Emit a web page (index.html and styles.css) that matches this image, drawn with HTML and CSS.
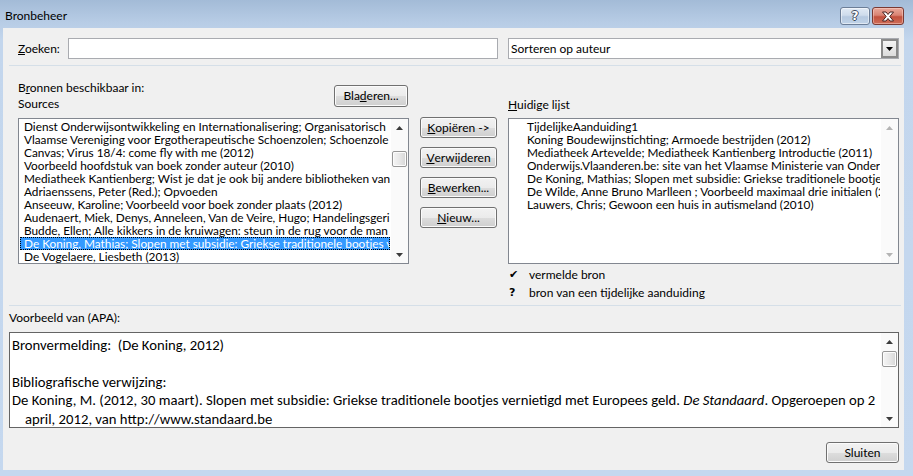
FILE: index.html
```html
<!DOCTYPE html>
<html lang="nl">
<head>
<meta charset="utf-8">
<title>Bronbeheer</title>
<link rel="stylesheet" href="styles.css">
</head>
<body>
<div class="window">
  <div class="titlebar">
    <span class="title">Bronbeheer</span>
    <div class="caption-btns">
      <div class="cbtn help"><span class="qmark">?</span></div>
      <div class="cbtn close">
        <svg width="14" height="11" viewBox="0 0 14 11"><path d="M1.5 1 L5 1 L7 3.5 L9 1 L12.5 1 L8.8 5.5 L12.5 10 L9 10 L7 7.5 L5 10 L1.5 10 L5.2 5.5 Z" fill="#fff" stroke="#4b2320" stroke-width="1" stroke-linejoin="round"/></svg>
      </div>
    </div>
  </div>
  <div class="panel">
    <div class="search-row">
      <div class="lbl-search"><u>Z</u>oeken:</div>
      <div class="textbox"></div>
      <div class="combo">
        <span class="combo-text">Sorteren op auteur</span>
        <div class="combo-btn"><svg width="7" height="4" viewBox="0 0 7 4"><path d="M0 0 H7 L3.5 4 Z" fill="#000"/></svg></div>
      </div>
    </div>
    <div class="sep"></div>
    <div class="lists">
      <div class="left-head">
        <div class="left-labels">
          <div>B<u>r</u>onnen beschikbaar in:</div>
          <div>Sources</div>
        </div>
        <div class="btn btn-browse">Bla<u>d</u>eren...</div>
      </div>
      <div class="mid-head"></div>
      <div class="right-head"><u>H</u>uidige lijst</div>

      <div class="listbox">
        <div class="items">
          <div class="item">Dienst Onderwijsontwikkeling en Internationalisering; Organisatorisch</div>
          <div class="item">Vlaamse Vereniging voor Ergotherapeutische Schoenzolen; Schoenzole</div>
          <div class="item">Canvas; Virus 18/4: come fly with me (2012)</div>
          <div class="item">Voorbeeld hoofdstuk van boek zonder auteur (2010)</div>
          <div class="item">Mediatheek Kantienberg; Wist je dat je ook bij andere bibliotheken van</div>
          <div class="item">Adriaenssens, Peter (Red.); Opvoeden</div>
          <div class="item">Anseeuw, Karoline; Voorbeeld voor boek zonder plaats (2012)</div>
          <div class="item">Audenaert, Miek, Denys, Anneleen, Van de Veire, Hugo; Handelingsgeri</div>
          <div class="item">Budde, Ellen; Alle kikkers in de kruiwagen: steun in de rug voor de man</div>
          <div class="item selected">De Koning, Mathias; Slopen met subsidie: Griekse traditionele bootjes v</div>
          <div class="item">De Vogelaere, Liesbeth (2013)</div>
        </div>
        <div class="vscroll">
          <div class="arrow"><svg width="7" height="4" viewBox="0 0 7 4"><path d="M3.5 0 L7 4 H0 Z" fill="#3c3c3c"/></svg></div>
          <div class="track"><div class="thumb thumb-left"></div></div>
          <div class="arrow"><svg width="7" height="4" viewBox="0 0 7 4"><path d="M0 0 H7 L3.5 4 Z" fill="#3c3c3c"/></svg></div>
        </div>
      </div>

      <div class="mid-buttons">
        <div class="btn btn-mid"><u>K</u>opiëren -&gt;</div>
        <div class="btn btn-mid"><u>V</u>erwijderen</div>
        <div class="btn btn-mid"><u>B</u>ewerken...</div>
        <div class="btn btn-mid"><u>N</u>ieuw...</div>
      </div>

      <div class="right-col">
        <div class="listbox">
          <div class="items items-right">
            <div class="item">TijdelijkeAanduiding1</div>
            <div class="item">Koning Boudewijnstichting; Armoede bestrijden (2012)</div>
            <div class="item">Mediatheek Artevelde; Mediatheek Kantienberg Introductie (2011)</div>
            <div class="item">Onderwijs.Vlaanderen.be: site van het Vlaamse Ministerie van Onderw</div>
            <div class="item">De Koning, Mathias; Slopen met subsidie: Griekse traditionele bootje</div>
            <div class="item">De Wilde, Anne Bruno Marlleen ; Voorbeeld maximaal drie initialen (2</div>
            <div class="item">Lauwers, Chris; Gewoon een huis in autismeland (2010)</div>
          </div>
          <div class="vscroll">
            <div class="arrow"><svg width="7" height="4" viewBox="0 0 7 4"><path d="M3.5 0 L7 4 H0 Z" fill="#b4b4b4"/></svg></div>
            <div class="track"></div>
            <div class="arrow"><svg width="7" height="4" viewBox="0 0 7 4"><path d="M0 0 H7 L3.5 4 Z" fill="#b4b4b4"/></svg></div>
          </div>
        </div>
        <div class="legend">
          <div class="legend-row"><span class="legend-mark">✔</span><span>vermelde bron</span></div>
          <div class="legend-row"><span class="legend-mark">?</span><span>bron van een tijdelijke aanduiding</span></div>
        </div>
      </div>
    </div>
    <div class="sep sep-2"></div>
    <div class="preview-label">Voorbeeld van (APA):</div>
    <div class="preview">
      <div class="preview-text">
        <div class="pline">Bronvermelding:&nbsp; (De Koning, 2012)</div>
        <div class="pline">&nbsp;</div>
        <div class="pline">Bibliografische verwijzing:</div>
        <div class="pline">De Koning, M. (2012, 30 maart). Slopen met subsidie: Griekse traditionele bootjes vernietigd met Europees geld. <i>De Standaard</i>. Opgeroepen op 2</div>
        <div class="pline indent">april, 2012, van http://www.standaard.be</div>
      </div>
      <div class="vscroll">
        <div class="arrow"><svg width="7" height="4" viewBox="0 0 7 4"><path d="M3.5 0 L7 4 H0 Z" fill="#3c3c3c"/></svg></div>
        <div class="track"><div class="thumb thumb-preview"></div></div>
        <div class="arrow"><svg width="7" height="4" viewBox="0 0 7 4"><path d="M0 0 H7 L3.5 4 Z" fill="#3c3c3c"/></svg></div>
      </div>
    </div>
    <div class="footer">
      <div class="btn btn-close">Sluiten</div>
    </div>
  </div>
</div>
</body>
</html>
```

FILE: styles.css
```css
* { box-sizing: border-box; }

html, body {
  margin: 0;
  padding: 0;
}

body {
  width: 913px;
  height: 476px;
  overflow: hidden;
  font-family: "Segoe UI", Lato, "Liberation Sans", sans-serif;
  font-size: 12px;
  color: #000;
  background: #c2d6ee;
}

.window {
  width: 913px;
  height: 476px;
  display: flex;
  flex-direction: column;
  background: linear-gradient(to bottom, #a3bbd7 0px, #b7cce5 22px, #c3d6ed 40px, #c5d8ef 100%);
}

.titlebar {
  height: 28px;
  display: flex;
  align-items: flex-start;
  padding-left: 5px;
}

.title {
  line-height: 16px;
  margin-top: 8px;
  color: #000;
}

.caption-btns {
  margin-left: auto;
  display: flex;
  gap: 2px;
  margin-top: 7px;
  margin-right: 9px;
}

.cbtn {
  height: 18px;
  border-radius: 3px;
  display: flex;
  align-items: center;
  justify-content: center;
}

.help {
  width: 30px;
  border: 1px solid #6c7e97;
  background: linear-gradient(to bottom, #e1eaf5 0%, #cfdcec 45%, #b6c9e0 55%, #c1d3e8 100%);
  box-shadow: inset 0 0 0 1px rgba(255,255,255,0.5);
}

.qmark {
  font-family: "DejaVu Sans", sans-serif;
  font-weight: bold;
  font-size: 12px;
  line-height: 12px;
  color: #fff;
  text-shadow: -1px 0 #3f4b5c, 1px 0 #3f4b5c, 0 -1px #3f4b5c, 0 1px #3f4b5c;
}

.close {
  width: 32px;
  border: 1px solid #7a3a33;
  background: linear-gradient(to bottom, #e9a99b 0%, #d98373 45%, #c2503d 55%, #cf6e58 100%);
  box-shadow: inset 0 0 0 1px rgba(255,220,210,0.45);
}

.panel {
  margin: 0 9px 6px 3px;
  height: 442px;
  background: #f0f0f0;
  padding: 10px 5px 0 6px;
  display: flex;
  flex-direction: column;
}

.search-row {
  display: flex;
  align-items: center;
  height: 21px;
  padding-left: 9px;
}

.lbl-search {
  width: 50px;
  line-height: 16px;
}

.textbox {
  width: 430px;
  height: 21px;
  background: #fff;
  border: 1px solid #a9abb0;
}

.combo {
  width: 391px;
  height: 21px;
  margin-left: 10px;
  background: #fff;
  border: 1px solid #a9abb0;
  display: flex;
  align-items: center;
  padding-left: 2px;
}

.combo-text {
  line-height: 16px;
}

.combo-btn {
  margin-left: auto;
  width: 17px;
  height: 19px;
  border: 2px solid #8a8a8a;
  background: linear-gradient(to bottom, #f4f4f4, #dcdcdc);
  display: flex;
  align-items: center;
  justify-content: center;
}

.sep {
  height: 1px;
  background: #d5dfe8;
  margin-top: 6px;
  width: 892px;
}

.lists {
  display: grid;
  grid-template-columns: 391px 77px 391px;
  grid-template-rows: 51px auto;
  column-gap: 11px;
  padding-left: 9px;
}

.left-head {
  display: flex;
  align-items: flex-start;
  padding-top: 14px;
}

.left-labels {
  line-height: 16px;
}

.btn {
  height: 21px;
  border: 1px solid #707070;
  border-radius: 3px;
  background: linear-gradient(to bottom, #f2f2f2 0%, #ebebeb 50%, #dddddd 51%, #cfcfcf 100%);
  box-shadow: inset 0 0 0 1px #fbfbfb;
  display: flex;
  align-items: center;
  justify-content: center;
  line-height: 16px;
}

.btn-browse {
  width: 74px;
  height: 22px;
  margin-left: auto;
  margin-right: 1px;
  margin-top: 5px;
}

.right-head {
  line-height: 16px;
  padding-top: 31px;
}

.listbox {
  height: 146px;
  background: #fff;
  border: 1px solid #828790;
  display: flex;
  margin-top: 1px;
}

.items {
  flex: 1;
  min-width: 0;
  padding: 1px 1px 0 1px;
  overflow: hidden;
  font-size: 11.8px;
}

.item {
  height: 13px;
  line-height: 13px;
  white-space: nowrap;
  overflow: hidden;
  padding-left: 4px;
}

.item.selected {
  background: #3399ff;
  color: #fff;
  outline: 1px dotted #000;
  outline-offset: -1px;
}

.items-right .item {
  padding-left: 17px;
}

.vscroll {
  width: 17px;
  flex: none;
  display: flex;
  flex-direction: column;
  background: #fafafa;
}

.arrow {
  height: 17px;
  display: flex;
  align-items: center;
  justify-content: center;
}

.track {
  flex: 1;
}

.thumb {
  margin-left: 1px;
  width: 15px;
  height: 16px;
  border: 1px solid #979797;
  border-radius: 2px;
  background: linear-gradient(to right, #f5f5f5 0%, #e8e8e8 50%, #d6d6d6 100%);
  box-shadow: inset 0 0 0 1px #fcfcfc;
}

.thumb-left {
  margin-top: 15px;
}

.mid-buttons {
  display: flex;
  flex-direction: column;
  gap: 9px;
}

.btn-mid {
  width: 77px;
}

.right-col {
  display: flex;
  flex-direction: column;
}

.legend {
  margin-top: 2px;
}

.legend-row {
  height: 18px;
  display: flex;
  align-items: center;
  line-height: 16px;
}

.legend-mark {
  width: 21px;
  padding-left: 1px;
  font-weight: bold;
  font-size: 11px;
  font-family: "DejaVu Sans", sans-serif;
}

.sep-2 {
  margin-top: 3px;
}

.preview-label {
  line-height: 16px;
  margin-top: 4px;
}

.preview {
  margin-top: 6px;
  height: 96px;
  width: 890px;
  background: #fff;
  border: 1px solid #646464;
  display: flex;
}

.preview-text {
  flex: 1;
  min-width: 0;
  overflow: hidden;
  padding: 3px 0 0 2px;
  font-family: Carlito, Calibri, Lato, "Liberation Sans", sans-serif;
  font-size: 14.7px;
}

.pline {
  height: 18.4px;
  line-height: 18px;
  white-space: nowrap;
}

.pline.indent {
  padding-left: 13px;
}

.thumb-preview {
  margin-top: 1px;
}

.footer {
  display: flex;
  justify-content: flex-end;
  margin-top: 14px;
  width: 890px;
}

.btn-close {
  width: 73px;
}
```
